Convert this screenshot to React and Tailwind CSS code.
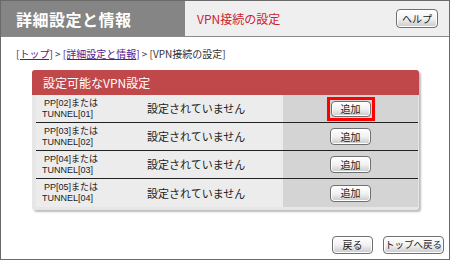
const rows = [
  { pp: "PP[02]または", tunnel: "TUNNEL[01]", active: true },
  { pp: "PP[03]または", tunnel: "TUNNEL[02]" },
  { pp: "PP[04]または", tunnel: "TUNNEL[03]" },
  { pp: "PP[05]または", tunnel: "TUNNEL[04]" },
];

const font = { fontFamily: '"Noto Sans CJK JP", "Liberation Sans", sans-serif' };
const labelFont = { fontFamily: '"Liberation Sans", "Noto Sans CJK JP", sans-serif' };

function Btn({ children, className = "" }) {
  return (
    <button
      className={
        "flex items-center justify-center whitespace-nowrap rounded-[4px] border border-[#6f6f6f] bg-gradient-to-b from-white via-[#f2f2f2] to-[#c9c9c9] leading-none text-[#222] shadow-[inset_0_0_0_1px_#fff] " +
        className
      }
    >
      {children}
    </button>
  );
}

export default function App() {
  return (
    <div
      className="flex h-[260px] w-[450px] flex-col overflow-hidden border border-[#6a6a6a] bg-white"
      style={font}
    >
      {/* Header */}
      <div className="flex h-[36px] shrink-0 border-b border-[#8a8a8a]">
        <div className="flex w-[184px] items-center bg-[#858585] pl-[15px] text-[16px] font-bold tracking-[0.5px] text-white">
          詳細設定と情報
        </div>
        <div className="flex flex-1 items-center justify-between bg-[#efefef] pl-[12px] pr-[11px]">
          <span className="text-[12px] text-[#cc2233]">VPN接続の設定</span>
          <Btn className="h-[19px] w-[42px] text-[10px]">ヘルプ</Btn>
        </div>
      </div>

      {/* Breadcrumb */}
      <div className="mt-[11px] pl-[15px] text-[10px] leading-[12px] text-[#333]">
        <a className="text-[#551a8b] underline">[トップ]</a>
        <span> &gt; </span>
        <a className="text-[#551a8b] underline">[詳細設定と情報]</a>
        <span> &gt; [VPN接続の設定]</span>
      </div>

      {/* Panel */}
      <div className="ml-[31px] mt-[10px] w-[387px] rounded-[3px] bg-[#e6e6e6] pb-[3px] shadow-[2px_2px_2px_#bdbdbd]">
        <div className="flex h-[25px] items-center rounded-t-[3px] bg-[#c0474a] pl-[11px] text-[12px] text-white">
          設定可能なVPN設定
        </div>
        <div className="pl-[4px] pr-[1px]">
          {rows.map((r, i) => (
            <div
              key={i}
              className={
                "flex h-[28px] " + (i < rows.length - 1 ? "border-b border-[#222]" : "")
              }
            >
              <div className="flex w-[247px] items-center bg-[#ececec]">
                <div
                  className="flex w-[111px] flex-col pl-[6px] text-[9px] leading-[11px] text-[#222]"
                  style={labelFont}
                >
                  <span className="pl-[2px]">{r.pp}</span>
                  <span>{r.tunnel}</span>
                </div>
                <span className="text-[11px] text-[#222]">設定されていません</span>
              </div>
              <div className="flex flex-1 items-center justify-center bg-[#d4d4d4]">
                {r.active ? (
                  <div className="border-[3px] border-[#ff0000] p-[1px]">
                    <Btn className="h-[16px] w-[40px] text-[10px]">追加</Btn>
                  </div>
                ) : (
                  <Btn className="h-[17px] w-[41px] text-[10px]">追加</Btn>
                )}
              </div>
            </div>
          ))}
        </div>
      </div>

      {/* Footer buttons */}
      <div className="mt-auto mb-[5px] flex justify-end gap-[10px] pr-[5px]">
        <Btn className="h-[18px] w-[41px] text-[10px]">戻る</Btn>
        <Btn className="h-[18px] w-[61px] text-[9.5px]">トップへ戻る</Btn>
      </div>
    </div>
  );
}
